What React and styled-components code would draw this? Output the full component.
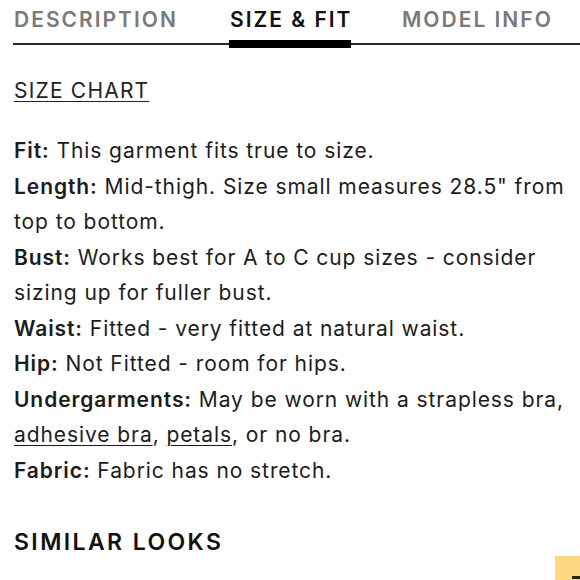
import React from 'react';
import styled, { createGlobalStyle } from 'styled-components';

const GlobalStyle = createGlobalStyle`
  html, body {
    margin: 0;
    padding: 0;
    background: #fff;
    overflow: hidden;
  }
  body {
    font-family: Inter, "Open Sans", Arial, sans-serif;
    color: #1c1c1c;
  }
`;

const Page = styled.div`
  width: 580px;
  height: 580px;
  position: relative;
  overflow: hidden;
`;

const Tabs = styled.div`
  display: flex;
  margin-left: 13px;
  border-bottom: 2px solid #2a2a2a;
  height: 45px;
  box-sizing: border-box;
`;

const Tab = styled.div`
  position: relative;
  font-size: 21px;
  font-weight: 600;
  letter-spacing: 2px;
  color: ${(p) => (p.active ? '#111' : '#7a7a7a')};
  padding-top: 7px;
  width: ${(p) => p.w}px;
  margin-left: ${(p) => p.ml || 0}px;
  white-space: nowrap;

  &::after {
    content: '';
    display: ${(p) => (p.active ? 'block' : 'none')};
    position: absolute;
    left: -1px;
    width: 122px;
    bottom: -5px;
    height: 8px;
    background: #000;
  }
`;

const Content = styled.div`
  padding: 0 10px 0 14px;
  width: 580px;
  box-sizing: border-box;
`;

const ChartLink = styled.a`
  display: inline-block;
  margin-top: 33px;
  font-size: 21px;
  letter-spacing: 1.2px;
  color: #222;
  text-decoration: underline;
  text-underline-offset: 3px;
  text-decoration-thickness: 1px;
`;

const Details = styled.div`
  margin-top: 30px;
  font-size: 21px;
  line-height: 35.5px;
  letter-spacing: 0.92px;
  color: #1c1c1c;
`;

const Label = styled.b`
  font-weight: 600;
`;

const Inline = styled.a`
  color: #1c1c1c;
  text-decoration: underline;
  text-underline-offset: 3px;
  text-decoration-thickness: 1px;
`;

const Heading = styled.h2`
  margin: 40px 0 0;
  font-size: 23px;
  font-weight: 600;
  letter-spacing: 2.4px;
  color: #111;
`;

const Badge = styled.div`
  position: absolute;
  left: 555px;
  top: 556px;
  width: 30px;
  height: 30px;
  background: #ffd97f;

  &::after {
    content: '';
    position: absolute;
    left: 17px;
    top: 20px;
    width: 8px;
    height: 3px;
    background: #222;
  }
`;

const items = [
  { k: 'Fit:', v: ' This garment fits true to size.' },
  { k: 'Length:', v: ' Mid-thigh. Size small measures 28.5" from top to bottom.' },
  { k: 'Bust:', v: ' Works best for A to C cup sizes - consider sizing up for fuller bust.' },
  { k: 'Waist:', v: ' Fitted - very fitted at natural waist.' },
  { k: 'Hip:', v: ' Not Fitted - room for hips.' },
];

export default function App() {
  return (
    <Page>
      <GlobalStyle />
      <Tabs>
        <Tab w={216} ml={1}>DESCRIPTION</Tab>
        <Tab w={172} active>SIZE &amp; FIT</Tab>
        <Tab>MODEL INFO</Tab>
      </Tabs>
      <Content>
        <ChartLink>SIZE CHART</ChartLink>
        <Details>
          {items.map((it) => (
            <div key={it.k}>
              <Label>{it.k}</Label>
              {it.v}
            </div>
          ))}
          <div>
            <Label>Undergarments:</Label> May be worn with a strapless bra,{' '}
            <Inline>adhesive bra</Inline>, <Inline>petals</Inline>, or no bra.
          </div>
          <div>
            <Label>Fabric:</Label> Fabric has no stretch.
          </div>
        </Details>
        <Heading>SIMILAR LOOKS</Heading>
      </Content>
      <Badge />
    </Page>
  );
}
